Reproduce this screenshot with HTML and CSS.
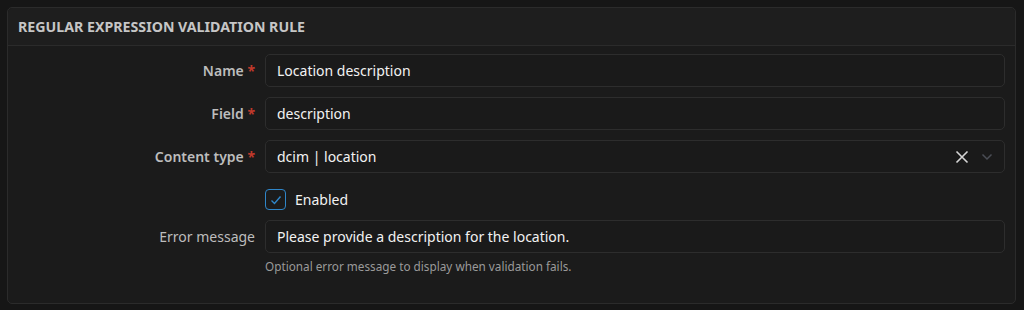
FILE: index.html
```html
<!DOCTYPE html>
<html lang="en">
<head>
  <meta charset="UTF-8">
  <title>Regular expression validation rule</title>
  <link rel="stylesheet" href="styles.css">
</head>
<body>
  <div class="card">
    <div class="card-header">Regular expression validation rule</div>
    <div class="card-body">
      <div class="row">
        <label class="label req">Name <span class="ast">*</span></label>
        <div class="control"><div class="input">Location description</div></div>
      </div>
      <div class="row">
        <label class="label req">Field <span class="ast">*</span></label>
        <div class="control"><div class="input">description</div></div>
      </div>
      <div class="row ct-row">
        <label class="label req">Content type <span class="ast">*</span></label>
        <div class="control">
          <div class="input select">
            <span class="value">dcim | location</span>
            <span class="clear">
              <svg width="14" height="14" viewBox="0 0 14 14"><path d="M1.5 1.5L12.5 12.5M12.5 1.5L1.5 12.5" stroke="#d6d6d6" stroke-width="1.6" fill="none"/></svg>
            </span>
            <span class="caret">
              <svg width="12" height="8" viewBox="0 0 12 8"><path d="M1.5 1.5L6 6L10.5 1.5" stroke="#4a4d55" stroke-width="1.5" fill="none"/></svg>
            </span>
          </div>
        </div>
      </div>
      <div class="row check-row">
        <div class="label"></div>
        <div class="control check">
          <span class="box">
            <svg width="12" height="10" viewBox="0 0 12 10"><path d="M1.5 5.5L4.5 8.5L10.5 1.5" stroke="#2f86c9" stroke-width="1.4" fill="none"/></svg>
          </span>
          <span>Enabled</span>
        </div>
      </div>
      <div class="row">
        <label class="label">Error message</label>
        <div class="control">
          <div class="input">Please provide a description for the location.</div>
          <div class="help">Optional error message to display when validation fails.</div>
        </div>
      </div>
    </div>
  </div>
</body>
</html>
```

FILE: styles.css
```css
* {
  margin: 0;
  padding: 0;
  box-sizing: border-box;
}
body {
  background: #161616;
  font-family: "Noto Sans", "Open Sans", sans-serif;
  color: #ececec;
  padding: 7px 8px 7px 7px;
}
.card {
  background: #1b1b1b;
  border: 1px solid #2b2b2b;
  border-radius: 5px;
  height: 297px;
}
.card-header {
  background: #1e1e1e;
  border-bottom: 1px solid #2b2b2b;
  border-radius: 5px 5px 0 0;
  height: 38px;
  padding: 0 10px;
  display: flex;
  align-items: center;
  font-size: 14.2px;
  font-weight: 700;
  text-transform: uppercase;
  color: #c6c6c6;
}
.card-body {
  padding: 8px 10px 0 10px;
}
.row {
  display: flex;
  align-items: flex-start;
  margin-bottom: 10px;
}
.label {
  width: 247px;
  flex: none;
  text-align: right;
  padding-right: 10px;
  height: 33px;
  line-height: 33px;
  font-size: 14px;
  color: #bdbdbd;
}
.label.req {
  font-weight: 600;
}
.ast {
  color: #c0392b;
  font-weight: 700;
}
.control {
  flex: 1;
}
.input {
  height: 33px;
  border: 1px solid #2d2d2d;
  border-radius: 5px;
  background: #1a1a1a;
  padding: 0 11px;
  display: flex;
  align-items: center;
  font-size: 14px;
  color: #f2f2f2;
}
.select .value {
  flex: 1;
}
.clear {
  display: flex;
  margin-right: 12px;
}
.caret {
  display: flex;
}
.ct-row {
  margin-bottom: 16px;
}
.check-row {
  margin-bottom: 10px;
}
.check-row .label {
  height: 21px;
}
.check {
  display: flex;
  align-items: center;
  height: 21px;
  font-size: 14px;
  color: #f2f2f2;
}
.box {
  width: 21px;
  height: 21px;
  border: 1.5px solid #2f86c9;
  border-radius: 4px;
  display: flex;
  align-items: center;
  justify-content: center;
  margin-right: 9px;
}
.help {
  font-size: 11.75px;
  color: #9a9a9a;
  margin-top: 5px;
}
```
